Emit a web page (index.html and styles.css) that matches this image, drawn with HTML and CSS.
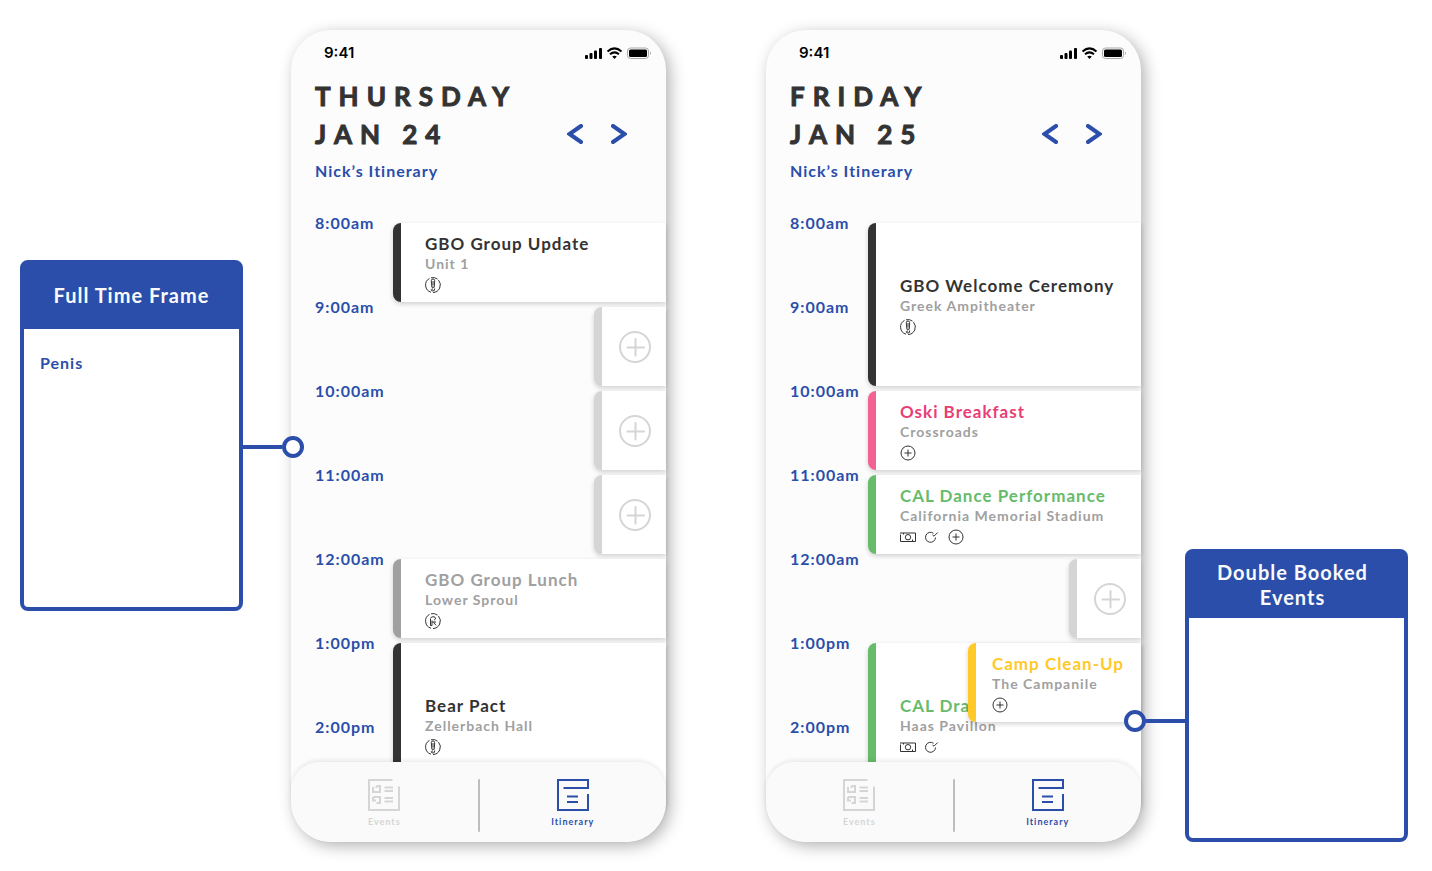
FILE: index.html
```html
<!DOCTYPE html>
<html lang="en">
<head>
<meta charset="utf-8">
<meta name="viewport" content="width=device-width, initial-scale=1">
<title>Itinerary</title>
<link rel="stylesheet" href="styles.css">
</head>
<body>
<svg class="sprite" aria-hidden="true">
  <symbol id="i-required" viewBox="0 0 16 16"><path d="M6 15.200A7.500 7.500 0 0 1 4.500 1.400M6 .8A7.500 7.500 0 0 1 12.500 2.100M13.500 3.100A7.500 7.500 0 0 1 8 15.500"/><path d="M6.300 3.700Q6.300 2 8 2T9.700 3.700L9.200 10.300H6.900ZM8 4V8.500M9.700 11.500Q10 14 8 14T6.300 12.500Q6.500 11.500 8.200 12.200"/></symbol>
  <symbol id="i-recommended" viewBox="0 0 16 16"><path d="M6 15.200A7.500 7.500 0 0 1 4.500 1.400M6 .8A7.500 7.500 0 0 1 12.500 2.100M13.500 3.100A7.500 7.500 0 0 1 8 15.500"/><path d="M5.500 5.500V12.500H7V7.500M5.500 4.800Q8 2.800 10 4.200Q11.500 6.200 9 7.200M7.200 9H11M8.500 9.200L11 12.300"/></symbol>
  <symbol id="i-plus" viewBox="0 0 16 16"><circle cx="8" cy="8" r="7"/><path d="M8 4.500V11.500M4.500 8H11.500"/></symbol>
  <symbol id="i-cash" viewBox="0 0 16 16"><path d="M.5 5.500V12.500H15.500V4H0M3.500 4V5.500M12.500 10.500V12.500"/><circle cx="8" cy="8.200" r="2.700"/></symbol>
  <symbol id="i-check" viewBox="0 0 16 16"><path d="M9.500 4.300A5 5 0 1 0 11.500 8.500M8.500 6L10 7.200L13.700 3.500"/></symbol>
  <symbol id="i-add" viewBox="0 0 32 32"><circle cx="16" cy="16" r="15"/><path d="M16.500 8V24.500M8.500 16.500H25"/></symbol>
  <symbol id="i-prev" viewBox="0 0 16 20"><path d="M14 2L2.500 10L14 18"/></symbol>
  <symbol id="i-next" viewBox="0 0 16 20"><path d="M2 2L13.500 10L2 18"/></symbol>
  <symbol id="i-events" viewBox="0 0 32 32"><path d="M24.500 1H1V31H31V7.500"/><path d="M5 8V13H12V7H8.500M8.500 7V9M5 18H12V24H8.500M5 18V21.500H8M16.500 8.500H25M16.500 12H25M16.500 19H25M16.500 22.500H25"/></symbol>
  <symbol id="i-itinerary" viewBox="0 0 32 32"><path d="M6.500 9H31V1H1V31H31V15M10 17.500H21M10 23H21"/></symbol>
  <symbol id="i-status" viewBox="0 0 68 12">
    <rect x="1" y="8" width="3" height="4" rx="1"/><rect x="5.500" y="6" width="3" height="6" rx="1"/><rect x="10" y="3.500" width="3" height="8.500" rx="1"/><rect x="15" y="1" width="3" height="11" rx="1"/>
    <path class="wifi" d="M23.500 4.500Q30.500-1.700 37.500 4.500M26 7.300Q30.500 3.500 35 7.300"/><path d="M28.200 9.500Q30.500 7.800 32.800 9.500L30.500 12Z"/>
    <rect class="case" x="43.500" y="1" width="21" height="10.500" rx="3"/><rect x="45" y="2.500" width="18" height="7.500" rx="1.500"/><path class="case-tip" d="M66 4.500Q68 6.200 66 8Z"/>
  </symbol>
</svg>

<main class="board">
  <aside class="note">
    <h2 class="note-title">Full Time Frame</h2>
    <p class="note-body">Penis</p>
  </aside>
  <div class="link link-left"><span class="link-line"></span><span class="link-ring"></span></div>

  <section class="phone">
    <div class="status"><span>9:41</span><svg class="status-icons"><use href="#i-status"/></svg></div>
    <header class="head">
      <h1 class="date">Thursday<br>Jan 24</h1>
      <nav class="pager">
        <button class="pager-btn" aria-label="Previous day"><svg><use href="#i-prev"/></svg></button>
        <button class="pager-btn" aria-label="Next day"><svg><use href="#i-next"/></svg></button>
      </nav>
    </header>
    <p class="owner">Nick’s Itinerary</p>
    <div class="schedule">
      <ol class="times"><li>8:00am</li><li>9:00am</li><li>10:00am</li><li>11:00am</li><li>12:00am</li><li>1:00pm</li><li>2:00pm</li></ol>
      <div class="events">
        <article class="card at-1 dark"><h3>GBO Group Update</h3><p>Unit 1</p><div class="tags"><svg><use href="#i-required"/></svg></div></article>
        <button class="free at-2" aria-label="Add event at 9:00am"><svg><use href="#i-add"/></svg></button>
        <button class="free at-3" aria-label="Add event at 10:00am"><svg><use href="#i-add"/></svg></button>
        <button class="free at-4" aria-label="Add event at 11:00am"><svg><use href="#i-add"/></svg></button>
        <article class="card at-5 gray"><h3>GBO Group Lunch</h3><p>Lower Sproul</p><div class="tags"><svg><use href="#i-recommended"/></svg></div></article>
        <article class="card at-6 long dark"><h3>Bear Pact</h3><p>Zellerbach Hall</p><div class="tags"><svg><use href="#i-required"/></svg></div></article>
      </div>
    </div>
    <nav class="tabs">
      <button class="tab"><svg><use href="#i-events"/></svg>Events</button>
      <span class="tabs-rule"></span>
      <button class="tab tab-on"><svg><use href="#i-itinerary"/></svg>Itinerary</button>
    </nav>
  </section>

  <section class="phone phone-second">
    <div class="status"><span>9:41</span><svg class="status-icons"><use href="#i-status"/></svg></div>
    <header class="head">
      <h1 class="date">Friday<br>Jan 25</h1>
      <nav class="pager">
        <button class="pager-btn" aria-label="Previous day"><svg><use href="#i-prev"/></svg></button>
        <button class="pager-btn" aria-label="Next day"><svg><use href="#i-next"/></svg></button>
      </nav>
    </header>
    <p class="owner">Nick’s Itinerary</p>
    <div class="schedule">
      <ol class="times"><li>8:00am</li><li>9:00am</li><li>10:00am</li><li>11:00am</li><li>12:00am</li><li>1:00pm</li><li>2:00pm</li></ol>
      <div class="events">
        <article class="card at-1 long dark"><h3>GBO Welcome Ceremony</h3><p>Greek Ampitheater</p><div class="tags"><svg><use href="#i-required"/></svg></div></article>
        <article class="card at-3 pink"><h3>Oski Breakfast</h3><p>Crossroads</p><div class="tags"><svg><use href="#i-plus"/></svg></div></article>
        <article class="card at-4 green"><h3>CAL Dance Performance</h3><p>California Memorial Stadium</p><div class="tags"><svg><use href="#i-cash"/></svg><svg><use href="#i-check"/></svg><svg><use href="#i-plus"/></svg></div></article>
        <button class="free at-5" aria-label="Add event at 12:00am"><svg><use href="#i-add"/></svg></button>
        <article class="card at-6 long green"><h3>CAL Drama</h3><p>Haas Pavillon</p><div class="tags"><svg><use href="#i-cash"/></svg><svg><use href="#i-check"/></svg></div></article>
        <article class="card at-6 overlap yellow"><h3>Camp Clean-Up</h3><p>The Campanile</p><div class="tags"><svg><use href="#i-plus"/></svg></div></article>
      </div>
    </div>
    <nav class="tabs">
      <button class="tab"><svg><use href="#i-events"/></svg>Events</button>
      <span class="tabs-rule"></span>
      <button class="tab tab-on"><svg><use href="#i-itinerary"/></svg>Itinerary</button>
    </nav>
  </section>

  <div class="link link-right"><span class="link-ring"></span><span class="link-line"></span></div>
  <aside class="note note-low">
    <h2 class="note-title">Double Booked Events</h2>
  </aside>
</main>
</body>
</html>
```
FILE: styles.css
```css
:root {
  --blue: #2a4eaa;
  --ink: #333333;
  --muted: #a0a0a0;
  --faint: #d5d5d5;
}

* { box-sizing: border-box; }

body, h1, h2, h3, p, ol { margin: 0; padding: 0; }

body {
  background: #ffffff;
  color: var(--blue);
  font-family: Lato, "Open Sans", sans-serif;
  font-size: 16px;
  font-weight: 700;
  line-height: 20px;
  letter-spacing: 1px;
}

button {
  margin: 0;
  padding: 0;
  border: 0;
  background: none;
  color: inherit;
  font: inherit;
  letter-spacing: inherit;
  cursor: pointer;
}

svg {
  display: block;
  fill: none;
  stroke: currentColor;
}

.sprite { position: absolute; width: 0; height: 0; }

.board {
  display: grid;
  grid-template-columns: 223fr 48px 375fr 100px 375fr 44px 223fr;
  align-items: start;
  padding: 30px 24px 29px 20px;
}

/* Annotations */
.note {
  grid-column: 1;
  margin-top: 230px;
  min-height: 351px;
  border: 4px solid var(--blue);
  border-radius: 8px;
}

.note-low {
  grid-column: 7;
  align-self: end;
  margin-top: 0;
  min-height: 293px;
}

.note-title {
  display: flex;
  align-items: center;
  justify-content: center;
  min-height: 65px;
  padding: 0 24px 2px;
  background: var(--blue);
  color: #fafafa;
  font-size: 20px;
  line-height: 25px;
  text-align: center;
}

.note-low .note-title { padding-right: 32px; }

.note-body { padding: 24px 16px; }

.link {
  display: flex;
  align-items: center;
  position: relative;
  z-index: 2;
}

.link-left { grid-column: 2; margin: 406px -13px 0 0; }
.link-right { grid-column: 6; align-self: end; margin: 0 0 110px -17px; }

.link-line { flex: 1; height: 4px; background: var(--blue); }

.link-ring {
  width: 22px;
  height: 22px;
  border: 4px solid var(--blue);
  border-radius: 50%;
  background: #ffffff;
}

.note, .link, .phone { grid-row: 1; }

/* Phone */
.phone {
  grid-column: 3;
  border-radius: 40px;
  background: #fcfcfc;
  box-shadow: 4px 4px 16px rgba(0, 0, 0, 0.3);
}

.phone-second { grid-column: 5; }

.status {
  display: flex;
  align-items: center;
  justify-content: space-between;
  padding: 13px 14px 14px 33px;
  color: #000000;
  font-family: Inter, sans-serif;
  font-size: 15px;
  font-weight: 600;
  letter-spacing: 0;
}

.status-icons { width: 68px; height: 12px; fill: currentColor; stroke: none; }
.wifi { fill: none; stroke: currentColor; stroke-width: 2; }
.case { fill: none; stroke: #a8a8a8; }
.case-tip { fill: #a8a8a8; }

.head {
  display: flex;
  align-items: flex-end;
  justify-content: space-between;
  padding: 0 39px 0 24px;
}

.date {
  color: var(--ink);
  font-size: 26px;
  line-height: 38px;
  letter-spacing: 8px;
  text-transform: uppercase;
  white-space: nowrap;
  -webkit-text-stroke: 1px var(--ink);
  stroke-linejoin: round;
}

.pager { display: flex; gap: 28px; padding-bottom: 9px; }
.pager-btn svg { width: 16px; height: 20px; stroke-width: 4; stroke-linecap: round; }

.owner { padding: 8px 24px 32px; }

.schedule { display: grid; grid-template-columns: 78px minmax(0, 1fr); padding-left: 24px; }

.times { display: grid; grid-auto-rows: 84px; height: 0; list-style: none; }

.events {
  display: grid;
  grid-template-columns: minmax(0, 1fr);
  grid-template-rows: repeat(7, 79px);
  row-gap: 5px;
  padding-top: 10px;
}

.card, .free {
  border-left: 8px solid var(--tone);
  border-radius: 8px 0 0 8px;
  background: #ffffff;
  box-shadow: 0 2px 5px rgba(0, 0, 0, 0.18);
}

.card {
  grid-column: 1;
  display: flex;
  flex-direction: column;
  justify-content: center;
  padding-left: 24px;
  white-space: nowrap;
}

.card h3 {
  color: var(--title, var(--tone));
  font-size: 17px;
  line-height: 24px;
}

.card p { color: var(--muted); font-size: 14px; line-height: 16px; }

.tags { display: flex; gap: 8px; margin-top: 5px; color: var(--ink); }
.tags svg { width: 16px; height: 16px; }

.free {
  --tone: var(--faint);
  display: flex;
  align-items: center;
  justify-content: center;
  justify-self: end;
  width: 72px;
  padding-left: 2px;
  color: var(--faint);
}

.free svg { width: 32px; height: 32px; stroke-width: 2; stroke-linecap: round; }

.dark { --tone: var(--ink); }
.gray { --tone: var(--muted); }
.pink { --tone: #f26394; --title: #e83e75; }
.green { --tone: #67bb6b; }
.yellow { --tone: #ffc928; }

.at-1 { grid-row: 1; }
.at-2 { grid-row: 2; }
.at-3 { grid-row: 3; }
.at-4 { grid-row: 4; }
.at-5 { grid-row: 5; }
.at-6 { grid-row: 6; }
.at-1.long { grid-row: 1 / span 2; }
.at-6.long { grid-row: 6 / span 2; }

.overlap { margin-left: 100px; padding-left: 16px; }

.tabs {
  display: flex;
  position: relative;
  min-height: 80px;
  margin-top: -44px;
  padding-top: 17px;
  border-radius: 28px 28px 40px 40px;
  background: #fafafa;
  box-shadow: 0 -2px 4px rgba(0, 0, 0, 0.08);
}

.tab {
  flex: 1;
  display: flex;
  flex-direction: column;
  align-items: center;
  align-self: flex-start;
  gap: 4px;
  color: var(--faint);
  font-size: 9px;
  line-height: 14px;
}

.tab svg { width: 32px; height: 32px; stroke-width: 2; }
.tab-on { color: var(--blue); }

.tabs-rule { width: 2px; height: 53px; border-radius: 1px; background: #bdbdbd; }
```
